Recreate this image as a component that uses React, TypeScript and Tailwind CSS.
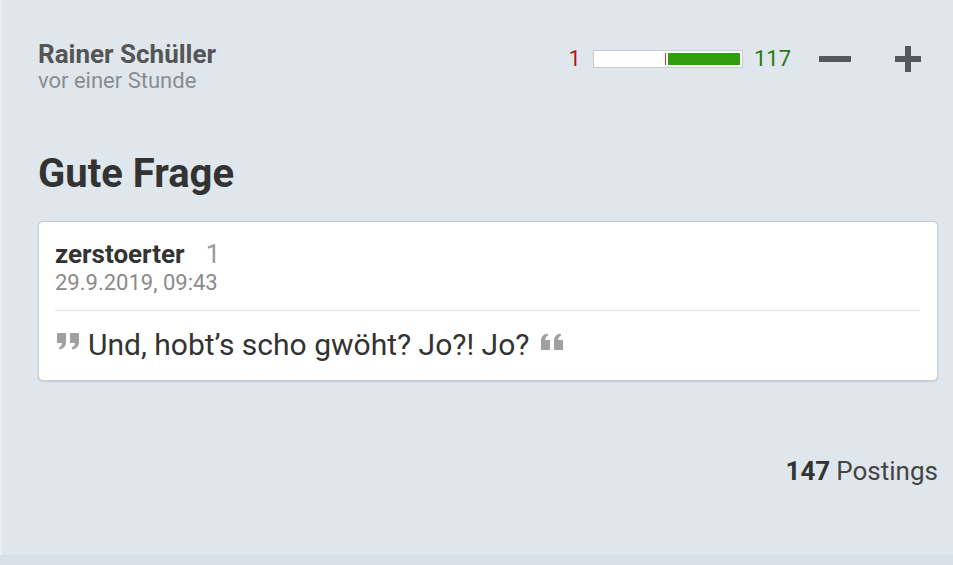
import React from 'react';

function MinusIcon() {
  return (
    <svg width="32" height="6" viewBox="0 0 32 6" className="block">
      <rect x="0" y="0" width="32" height="6" fill="#55595c" />
    </svg>
  );
}

function PlusIcon() {
  return (
    <svg width="26" height="26" viewBox="0 0 26 26" className="block">
      <rect x="0" y="10" width="26" height="6" fill="#55595c" />
      <rect x="10" y="0" width="6" height="26" fill="#55595c" />
    </svg>
  );
}

// quote mark drawn as a small block with a curved tail
const mark = 'M0 0 H9 V9 C9 13 7 15.5 2.5 16.5 L1.8 14.6 C4 13.6 4.8 12 4.9 10 H0 Z';

function QuoteIcon({ flip }: { flip?: boolean }) {
  return (
    <svg
      width="22"
      height="17"
      viewBox="0 0 22 17"
      className={flip ? 'block rotate-180' : 'block'}
      fill="#a0a0a0"
    >
      <path d={mark} />
      <path d={mark} transform="translate(13 0)" />
    </svg>
  );
}

export default function App() {
  return (
    <div
      className="w-[953px] h-[565px] bg-[#dfe7ed] flex flex-col text-[#333]"
      style={{ fontFamily: 'Roboto, "Liberation Sans", sans-serif' }}
    >
      <div className="flex-1 pl-[36px] pr-[15px] pt-[39px] border-l-2 border-[#e8eef2]">
        <div className="flex items-start justify-between">
          <div>
            <div className="text-[26px] font-bold leading-[30px] text-[#555]">Rainer Schüller</div>
            <div className="text-[22px] leading-[24px] text-[#8a8d90]">vor einer Stunde</div>
          </div>
          <div className="flex items-center mt-[6px] mr-[17px] h-[28px]">
            <span className="text-[22px] leading-[28px] text-[#b4171c]">1</span>
            <div className="ml-[12px] w-[150px] h-[18px] border border-[#c9cccf] bg-white flex justify-end items-center pr-[2px]">
              <div className="w-[1px] h-[12px] bg-[#c0392b] mr-[2px]" />
              <div className="w-[72px] h-[12px] bg-[#2f9d0d]" />
            </div>
            <span className="ml-[11px] text-[22px] leading-[28px] text-[#267a14]">117</span>
            <div className="ml-[28px]">
              <MinusIcon />
            </div>
            <div className="ml-[44px]">
              <PlusIcon />
            </div>
          </div>
        </div>

        <h1 className="mt-[57px] text-[40px] font-bold leading-[48px] text-[#333]">Gute Frage</h1>

        <div className="mt-[23px] bg-white border border-[#c8cbce] rounded-[5px] shadow-[0_1px_2px_rgba(0,0,0,0.12)] pl-[16px] pr-[17px] pt-[17px] pb-[17px]">
          <div className="flex items-baseline">
            <span className="text-[26px] font-bold leading-[30px] text-[#333]">zerstoerter</span>
            <span className="ml-[21px] text-[26px] leading-[30px] text-[#9a9a9a]">1</span>
          </div>
          <div className="mt-[1px] text-[22px] leading-[26px] text-[#8a8a8a]">29.9.2019, 09:43</div>
          <div className="mt-[14px] border-t border-[#e3e3e3]" />
          <div className="mt-[16px] flex items-start text-[30px] leading-[36px] text-[#333]">
            <div className="mt-[6px] ml-[2px] mr-[9px]">
              <QuoteIcon />
            </div>
            <span>Und, hobt’s scho gwöht? Jo?! Jo?</span>
            <div className="mt-[6px] ml-[12px]">
              <QuoteIcon flip />
            </div>
          </div>
        </div>

        <div className="mt-[75px] flex justify-end text-[26px] leading-[30px]">
          <span className="font-bold text-[#333]">147</span>
          <span className="ml-[6px] text-[#444]">Postings</span>
        </div>
      </div>
      <div className="h-[10px] bg-[#d8e1e7]" />
    </div>
  );
}
